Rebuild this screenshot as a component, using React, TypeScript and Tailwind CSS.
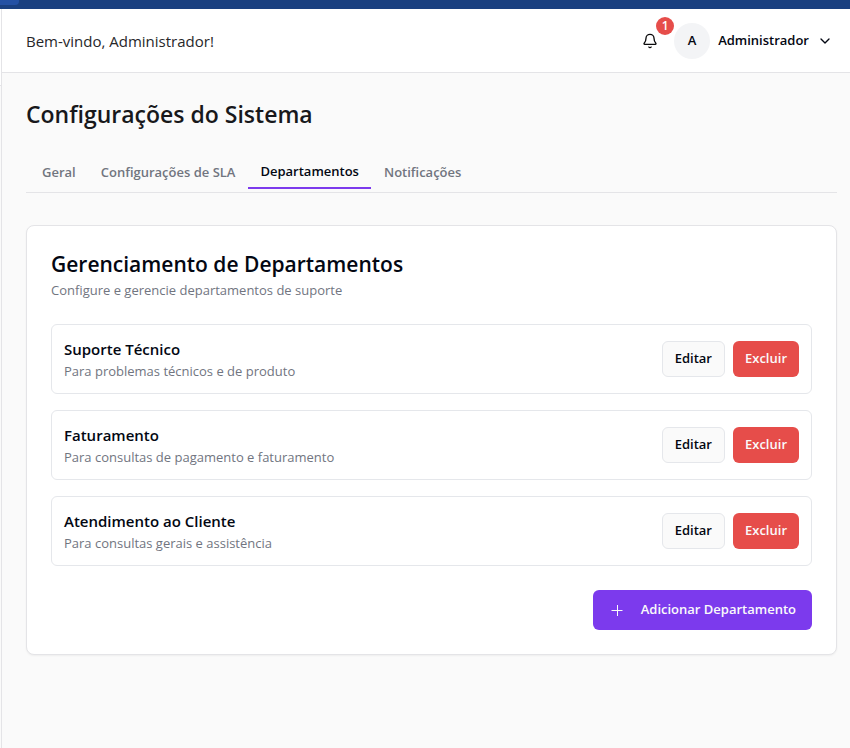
import { Bell, ChevronDown } from "lucide-react";

const tabs = ["Geral", "Configurações de SLA", "Departamentos", "Notificações"];

const departments = [
  { name: "Suporte Técnico", description: "Para problemas técnicos e de produto" },
  { name: "Faturamento", description: "Para consultas de pagamento e faturamento" },
  { name: "Atendimento ao Cliente", description: "Para consultas gerais e assistência" },
];

function Header() {
  return (
    <header className="flex h-16 items-center justify-between border-b border-[#e4e4e7] bg-white pr-[17px] pl-6">
      <p className="text-[15px] leading-6 text-[#27272a]">Bem-vindo, Administrador!</p>
      <div className="flex items-center">
        <button type="button" aria-label="Notificações" className="relative flex h-9 w-12 items-center justify-center">
          <Bell className="size-4 text-[#09090b]" strokeWidth={2} />
          <span className="absolute -top-1.5 right-0 flex size-[18px] items-center justify-center rounded-full bg-[#e64d4a] text-[12px] font-semibold text-white">
            1
          </span>
        </button>
        <button type="button" className="flex items-center gap-2 text-[13px] font-semibold text-[#030712]">
          <span className="flex size-9 items-center justify-center rounded-full bg-[#f3f4f6]">A</span>
          <span>Administrador</span>
          <ChevronDown className="size-4" strokeWidth={2} />
        </button>
      </div>
    </header>
  );
}

function Tabs() {
  return (
    <div role="tablist" className="mt-5 flex h-[43px] items-center gap-px border-b border-[#e4e4e7] px-1">
      {tabs.map((tab) => {
        const active = tab === "Departamentos";
        return (
          <button
            key={tab}
            type="button"
            role="tab"
            aria-selected={active}
            className={
              active
                ? "h-9 border-b-2 border-[#7c3aed] px-3 pt-1 text-[13px] font-semibold text-[#030712]"
                : "h-9 px-3 pt-1 text-[13px] font-semibold text-[#71757f]"
            }
          >
            {tab}
          </button>
        );
      })}
    </div>
  );
}

export default function App() {
  return (
    <div className="flex min-h-screen flex-col bg-[#fafafa] font-['Open_Sans','Noto_Sans',sans-serif]">
      <div className="h-[9px] bg-[#1a4080]">
        <div className="h-[5px] w-[19px] rounded-br-sm bg-[#2451a4]" />
      </div>
      <div className="flex flex-1">
        <aside className="w-[2px] border-r border-[#e4e4e7]">
          <div className="h-[77px] border-b border-[#e4e4e7] bg-white" />
        </aside>
        <div className="min-w-0 flex-1">
          <Header />
          <main className="pt-[25px] pr-[13px] pb-6 pl-6">
            <h1 className="text-[23px] leading-8 font-semibold text-[#18181b]">Configurações do Sistema</h1>
            <Tabs />
            <section className="mt-8 rounded-lg border border-[#e4e4e7] bg-white p-6 shadow-xs">
              <h2 className="text-[21px] leading-7 font-semibold text-[#030712]">
                Gerenciamento de Departamentos
              </h2>
              <p className="mt-[2px] text-[13px] leading-5 text-[#71757f]">
                Configure e gerencie departamentos de suporte
              </p>
              <ul className="mt-6 space-y-4">
                {departments.map((department) => (
                  <li
                    key={department.name}
                    className="flex items-center justify-between rounded-md border border-[#e5e7eb] p-3"
                  >
                    <div>
                      <h3 className="text-[15px] leading-6 font-semibold text-[#030712]">{department.name}</h3>
                      <p className="text-[13px] leading-5 text-[#71757f]">{department.description}</p>
                    </div>
                    <div className="flex gap-2 text-[13px] font-semibold">
                      <button
                        type="button"
                        className="h-9 rounded-md border border-[#e5e7eb] bg-[#fafafa] px-3 text-[#030712]"
                      >
                        Editar
                      </button>
                      <button type="button" className="h-9 rounded-md bg-[#e64d4a] px-3 text-[#fafafa]">
                        Excluir
                      </button>
                    </div>
                  </li>
                ))}
              </ul>
              <div className="mt-6 flex justify-end">
                <button
                  type="button"
                  className="flex h-10 items-center gap-4 rounded-md bg-[#7c3aed] px-4 text-[13px] font-semibold text-[#fafafa]"
                >
                  <svg viewBox="0 0 16 16" className="size-4" fill="none" stroke="currentColor" strokeWidth={1} aria-hidden="true">
                    <path d="M2.5 8.5h11M8.5 3v11" />
                  </svg>
                  Adicionar Departamento
                </button>
              </div>
            </section>
          </main>
        </div>
      </div>
    </div>
  );
}
